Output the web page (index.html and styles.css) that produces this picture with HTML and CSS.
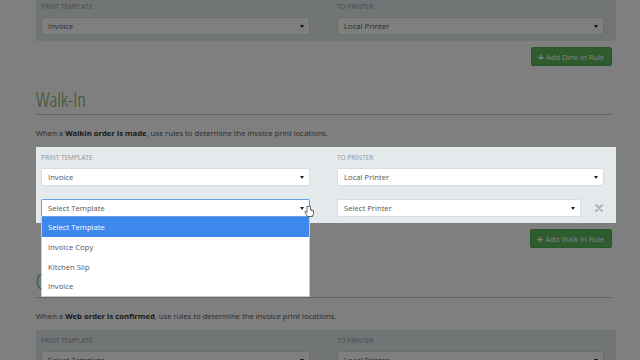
FILE: index.html
```html
<!DOCTYPE html>
<html lang="en">
<head>
    <meta charset="UTF-8">
    <meta name="viewport" content="width=device-width, initial-scale=1.0">
    <title>Print Rules</title>
    <link rel="stylesheet" href="styles.css">
</head>
<body>

<div class="backdrop"></div>

<div class="page">

    <!-- Dine In (scrolled, only the last rule shows) -->
    <section class="rule-section">
        <div class="rule-box">
            <div class="rule-row">
                <div class="field">
                    <div class="field-label">Print Template</div>
                    <div class="select">Invoice<span class="caret"></span></div>
                </div>
                <div class="field">
                    <div class="field-label">To Printer</div>
                    <div class="select">Local Printer<span class="caret"></span></div>
                </div>
            </div>
        </div>
        <div class="actions">
            <button class="btn-add"><span class="plus">+</span> Add Dine In Rule</button>
        </div>
    </section>

    <!-- Walk In -->
    <section class="rule-section">
        <h2 class="section-title">Walk-In</h2>
        <p class="section-desc">When a <b>Walkin order is made</b>, use rules to determine the invoice print locations.</p>
        <div class="rule-box active">
            <div class="rule-row">
                <div class="field">
                    <div class="field-label">Print Template</div>
                    <div class="select">Invoice<span class="caret"></span></div>
                </div>
                <div class="field">
                    <div class="field-label">To Printer</div>
                    <div class="select">Local Printer<span class="caret"></span></div>
                </div>
            </div>
            <div class="rule-row">
                <div class="field">
                    <div class="select focus">Select Template<span class="caret"></span>
                        <svg class="pointer" width="10" height="13" viewBox="0 0 10 13">
                            <path d="M3 1.5v6l-1-1c-.6-.6-1.5 0-1 .8L3.5 11.5h5l1-3V6c0-.6-1-.6-1 0v-.5c0-.6-1-.6-1 0V5c0-.6-1-.6-1 0V1.5c0-.7-1.5-.7-1.5 0z" fill="#fff" stroke="#222" stroke-width=".7"/>
                        </svg>
                    </div>
                    <ul class="dropdown">
                        <li class="selected">Select Template</li>
                        <li>Invoice Copy</li>
                        <li>Kitchen Slip</li>
                        <li>Invoice</li>
                    </ul>
                </div>
                <div class="field with-remove">
                    <div class="select">Select Printer<span class="caret"></span></div>
                    <span class="remove">
                        <svg width="8" height="8" viewBox="0 0 8 8">
                            <path d="M1 1L7 7M7 1L1 7" stroke="#a9b9c3" stroke-width="2" stroke-linecap="round"/>
                        </svg>
                    </span>
                </div>
            </div>
        </div>
        <div class="actions">
            <button class="btn-add"><span class="plus">+</span> Add Walk In Rule</button>
        </div>
    </section>

    <!-- Online -->
    <section class="rule-section">
        <h2 class="section-title online">Online</h2>
        <p class="section-desc">When a <b>Web order is confirmed</b>, use rules to determine the invoice print locations.</p>
        <div class="rule-box">
            <div class="rule-row">
                <div class="field">
                    <div class="field-label">Print Template</div>
                    <div class="select">Select Template<span class="caret"></span></div>
                </div>
                <div class="field">
                    <div class="field-label">To Printer</div>
                    <div class="select">Local Printer<span class="caret"></span></div>
                </div>
            </div>
        </div>
    </section>

</div>

</body>
</html>
```

FILE: styles.css
```css
body {
    margin: 0;
    background-color: #fff;
    color: #555;
    font-family: "Open Sans", "Noto Sans", sans-serif;
    font-size: 7.7px;
    overflow: hidden;
}

.backdrop {
    position: fixed;
    top: 0;
    left: 0;
    right: 0;
    bottom: 0;
    background-color: rgba(0, 0, 0, 0.5);
    z-index: 10;
}

.page {
    margin-top: -4px;
    padding: 0 24px 0 36px;
}

.section-title {
    margin: 22px 4px 0 0;
    padding-bottom: 2px;
    border-bottom: 1px solid #c6c6c6;
    font-size: 20px;
    line-height: 24px;
    font-weight: 300;
    font-stretch: 87%;
    color: #5fae5f;
}
.section-title.online {
    padding-bottom: 3px;
}

.section-desc {
    margin: 12px 0 8px;
    line-height: 12px;
}
.section-desc b {
    color: #333;
}

.rule-box {
    display: flex;
    flex-direction: column;
    gap: 13px;
    background-color: #e4eaec;
    padding: 6px 12px 6px 5px;
}
.rule-box.active {
    position: relative;
    z-index: 20;
}

.rule-row {
    display: flex;
    gap: 27px;
}

.field {
    position: relative;
    width: 269px;
}
.field + .field {
    width: 267px;
}
.field.with-remove {
    display: flex;
    align-items: center;
}
.field.with-remove .select {
    flex: 1;
}

.field-label {
    margin-bottom: 5px;
    font-size: 6.5px;
    line-height: 10px;
    text-transform: uppercase;
    color: #8d9397;
}

.select {
    position: relative;
    height: 18px;
    box-sizing: border-box;
    padding: 0 6px;
    background-color: #fff;
    border: 1px solid #d7dde0;
    border-radius: 2px;
    line-height: 16px;
    color: #555;
}
.select.focus {
    border-color: #6a9fde;
}

.caret {
    position: absolute;
    right: 5px;
    top: 7px;
    width: 0;
    height: 0;
    border-left: 2px solid transparent;
    border-right: 2px solid transparent;
    border-top: 3px solid #222;
}

.pointer {
    position: absolute;
    right: -5px;
    top: 5px;
}

.remove {
    width: 23px;
    display: flex;
    justify-content: flex-end;
    padding-right: 1px;
    box-sizing: border-box;
}

.dropdown {
    position: absolute;
    top: 18px;
    left: 0;
    right: 0;
    margin: 0;
    padding: 0;
    list-style: none;
    background-color: #fff;
    border: 1px solid #c9c9c9;
    border-top: none;
    box-sizing: border-box;
}
.dropdown li {
    height: 19.75px;
    box-sizing: border-box;
    padding: 2px 0 0 6px;
    line-height: 17.75px;
    color: #555;
}
.dropdown li.selected {
    background-color: #3d87ee;
    color: #fff;
}

.actions {
    display: flex;
    justify-content: flex-end;
    padding: 6px 4px 0 0;
}

.btn-add {
    display: flex;
    align-items: center;
    gap: 2px;
    height: 19px;
    padding: 0 7px 0 6px;
    background-color: #5cb85c;
    border: 1px solid #4cae4c;
    border-radius: 2px;
    color: #fff;
    font-family: inherit;
    font-size: 7.5px;
}
.btn-add .plus {
    font-size: 11px;
    font-weight: 700;
    line-height: 1;
}
```
